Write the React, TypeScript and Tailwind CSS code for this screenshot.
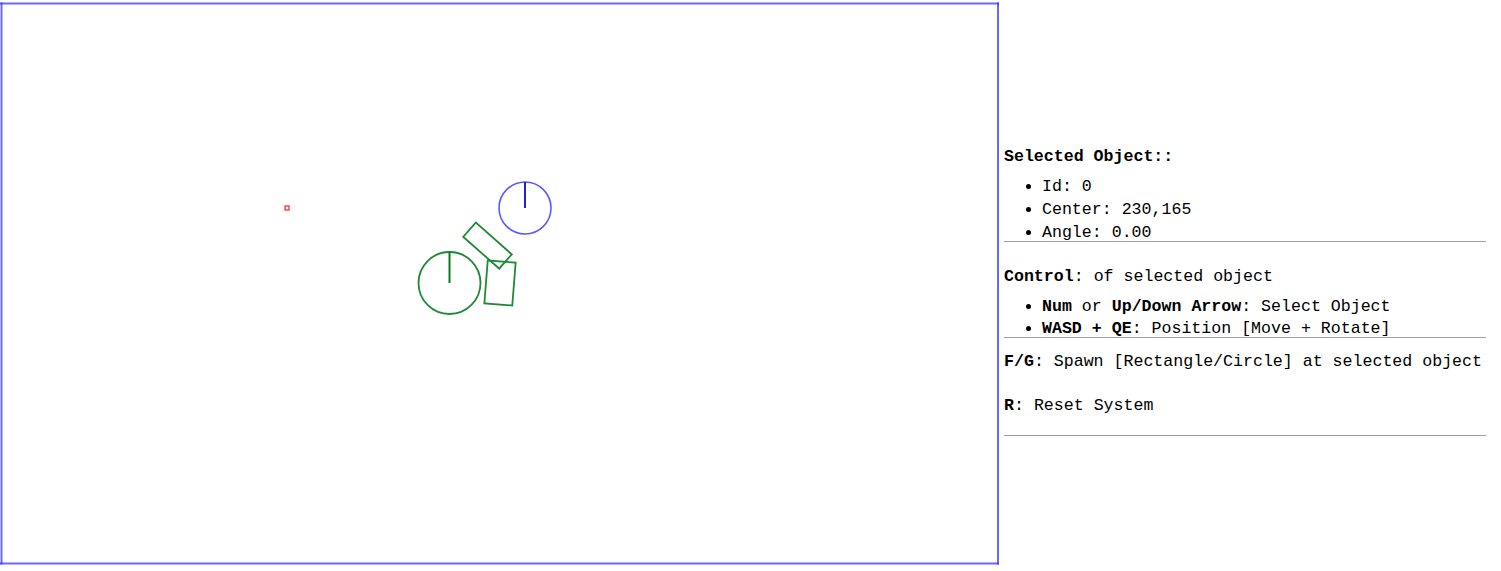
import React from "react";

const mono = { fontFamily: '"Liberation Mono", "DejaVu Sans Mono", monospace' };

function Scene() {
  const blue = "rgba(40,40,255,0.7)";
  const green = "#1f8a35";
  return (
    <svg width={1000} height={567} className="block shrink-0">
      {/* canvas frame */}
      <line x1={0} y1={3.5} x2={999} y2={3.5} stroke={blue} strokeWidth={2} />
      <line x1={1.5} y1={2.5} x2={1.5} y2={564.5} stroke={blue} strokeWidth={2} />
      <line x1={998} y1={2.5} x2={998} y2={564.5} stroke={blue} strokeWidth={2} />
      <line x1={0} y1={563.5} x2={999} y2={563.5} stroke={blue} strokeWidth={2} />

      {/* red marker */}
      <rect x={285} y={206} width={4} height={4} fill="none" stroke="#ff2020" strokeWidth={1.2} />

      {/* blue circle */}
      <circle cx={525} cy={208} r={26} fill="none" stroke="#5a5aff" strokeWidth={1.6} />
      <line x1={525} y1={208} x2={525} y2={182} stroke="#2020e0" strokeWidth={2} />

      {/* green circle */}
      <circle cx={449.5} cy={283} r={31} fill="none" stroke={green} strokeWidth={1.8} />
      <line x1={449.5} y1={283} x2={449.5} y2={252} stroke="#0a7a20" strokeWidth={2} />

      {/* rotated rect 1 */}
      <rect x={487.5 - 24} y={245.6 - 9.5} width={48} height={19} fill="none" stroke={green} strokeWidth={1.8}
        transform="rotate(41.5 487.5 245.6)" />

      {/* rotated rect 2 */}
      <rect x={500 - 14} y={283 - 21.5} width={28} height={43} fill="none" stroke={green} strokeWidth={1.8}
        transform="rotate(4.5 500 283)" />
    </svg>
  );
}

export default function App() {
  return (
    <div className="flex bg-white text-black" style={mono}>
      <Scene />
      <div className="ml-[4px] w-[482px] pt-[145px] text-[16.6px] leading-[23px]">
        <div className="font-bold">Selected Object::</div>
        <ul className="list-disc pl-[38px] mt-[7px]">
          <li>Id: 0</li>
          <li>Center: 230,165</li>
          <li>Angle: 0.00</li>
        </ul>
        <div className="h-px bg-[#a0a0a0] -mt-[3px]" />

        <div className="mt-[23px]">
          <b>Control</b>: of selected object
        </div>
        <ul className="list-disc pl-[38px] mt-[8px] leading-[22px]">
          <li>
            <b>Num</b> or <b>Up/Down Arrow</b>: Select Object
          </li>
          <li>
            <b>WASD + QE</b>: Position [Move + Rotate]
          </li>
        </ul>
        <div className="h-px bg-[#a0a0a0] -mt-[3px]" />

        <div className="mt-[12px]">
          <b>F/G</b>: Spawn [Rectangle/Circle] at selected object
        </div>
        <div className="mt-[21px]">
          <b>R</b>: Reset System
        </div>
        <div className="h-px bg-[#a0a0a0] mt-[18px]" />
      </div>
    </div>
  );
}
